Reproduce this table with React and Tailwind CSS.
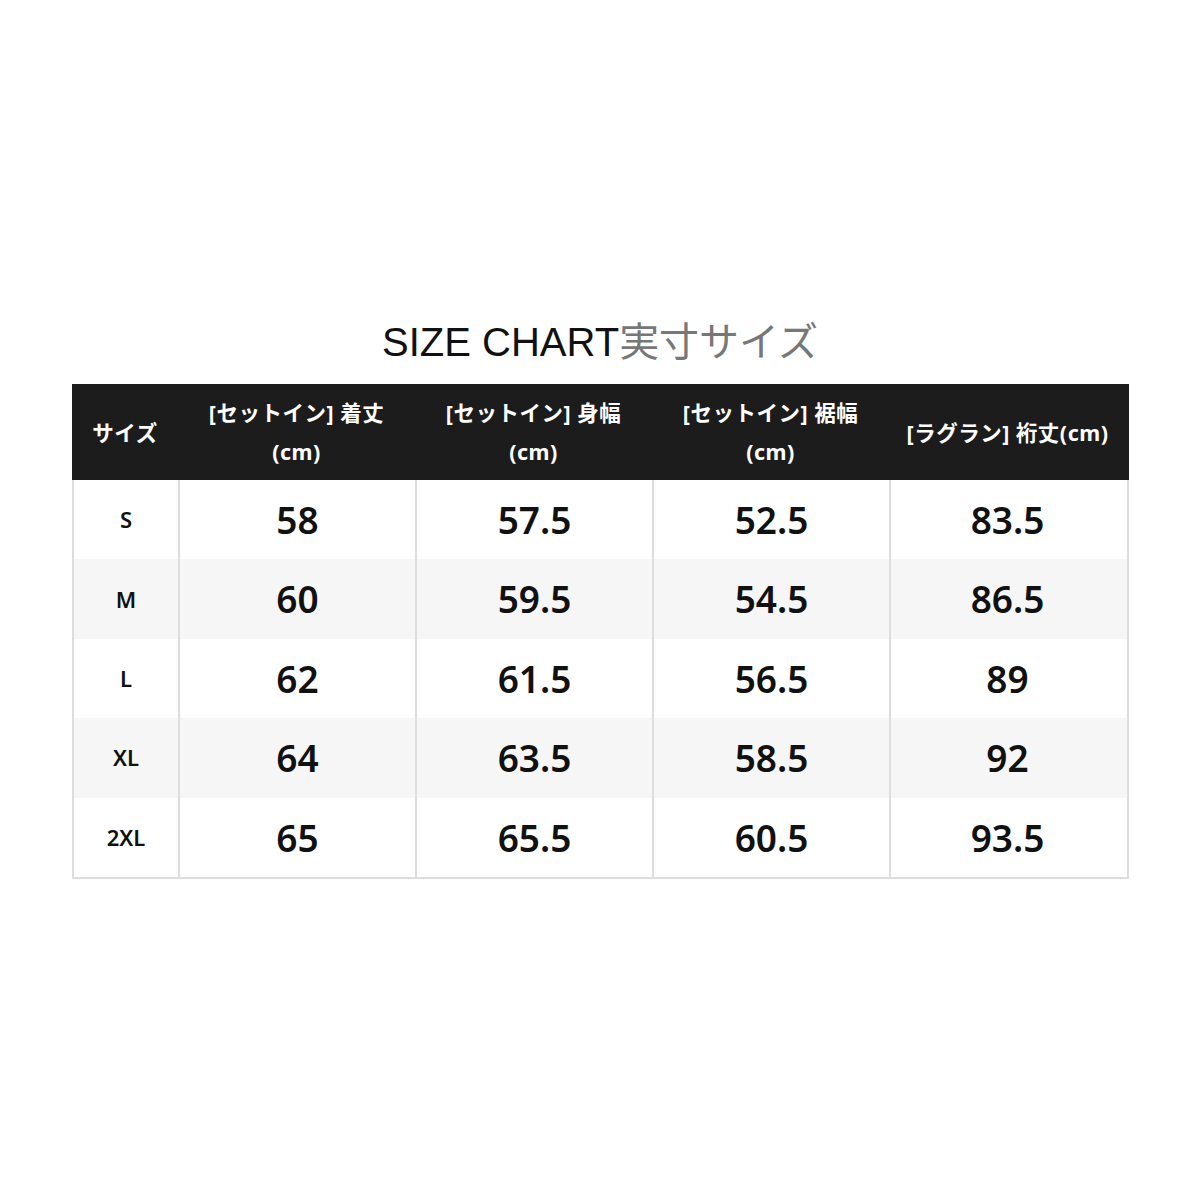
const headers = [
  ['サイズ'],
  ['[セットイン] 着丈', '(cm)'],
  ['[セットイン] 身幅', '(cm)'],
  ['[セットイン] 裾幅', '(cm)'],
  ['[ラグラン] 裄丈(cm)'],
];

const rows = [
  ['S', '58', '57.5', '52.5', '83.5'],
  ['M', '60', '59.5', '54.5', '86.5'],
  ['L', '62', '61.5', '56.5', '89'],
  ['XL', '64', '63.5', '58.5', '92'],
  ['2XL', '65', '65.5', '60.5', '93.5'],
];

const jp = { fontFamily: '"Noto Sans", "Noto Sans CJK JP", sans-serif' };

export default function App() {
  return (
    <div className="w-[1200px] h-[1200px] bg-white pt-[314px]">
      <h1
        className="text-center text-[40px] leading-[56px] text-[#111]"
        style={{ fontFamily: '"Liberation Sans", "Noto Sans CJK JP", sans-serif' }}
      >
        SIZE CHART<span className="text-[#777]">実寸サイズ</span>
      </h1>

      <div className="mx-[72px] mt-[14px] w-[1057px] border-x-2 border-b-2 border-[#dddddd]" style={jp}>
        <div className="grid grid-cols-[106px_237px_237px_237px_237px] h-[96px] bg-[#1c1c1c] -mx-[2px] w-[1057px]">
          {headers.map((h, i) => (
            <div key={i} className="flex flex-col items-center justify-center text-white font-bold text-[21.5px] leading-[39px] tracking-[0.5px]">
              {h.map((line) => (
                <span key={line}>{line}</span>
              ))}
            </div>
          ))}
        </div>
        {rows.map((r, i) => (
          <div
            key={r[0]}
            className={`grid grid-cols-[106px_237px_237px_237px_233px] h-[79.4px] ${i % 2 === 1 ? 'bg-[#f6f6f6]' : 'bg-white'}`}
          >
            {r.map((v, j) => (
              <div
                key={j}
                className={`flex items-center justify-center text-[#111] ${j === 0 ? 'text-[22px] font-semibold' : 'text-[37px] font-semibold'} ${j < 4 ? 'border-r-2 border-[#dddddd]' : ''}`}
              >
                {v}
              </div>
            ))}
          </div>
        ))}
      </div>
    </div>
  );
}
